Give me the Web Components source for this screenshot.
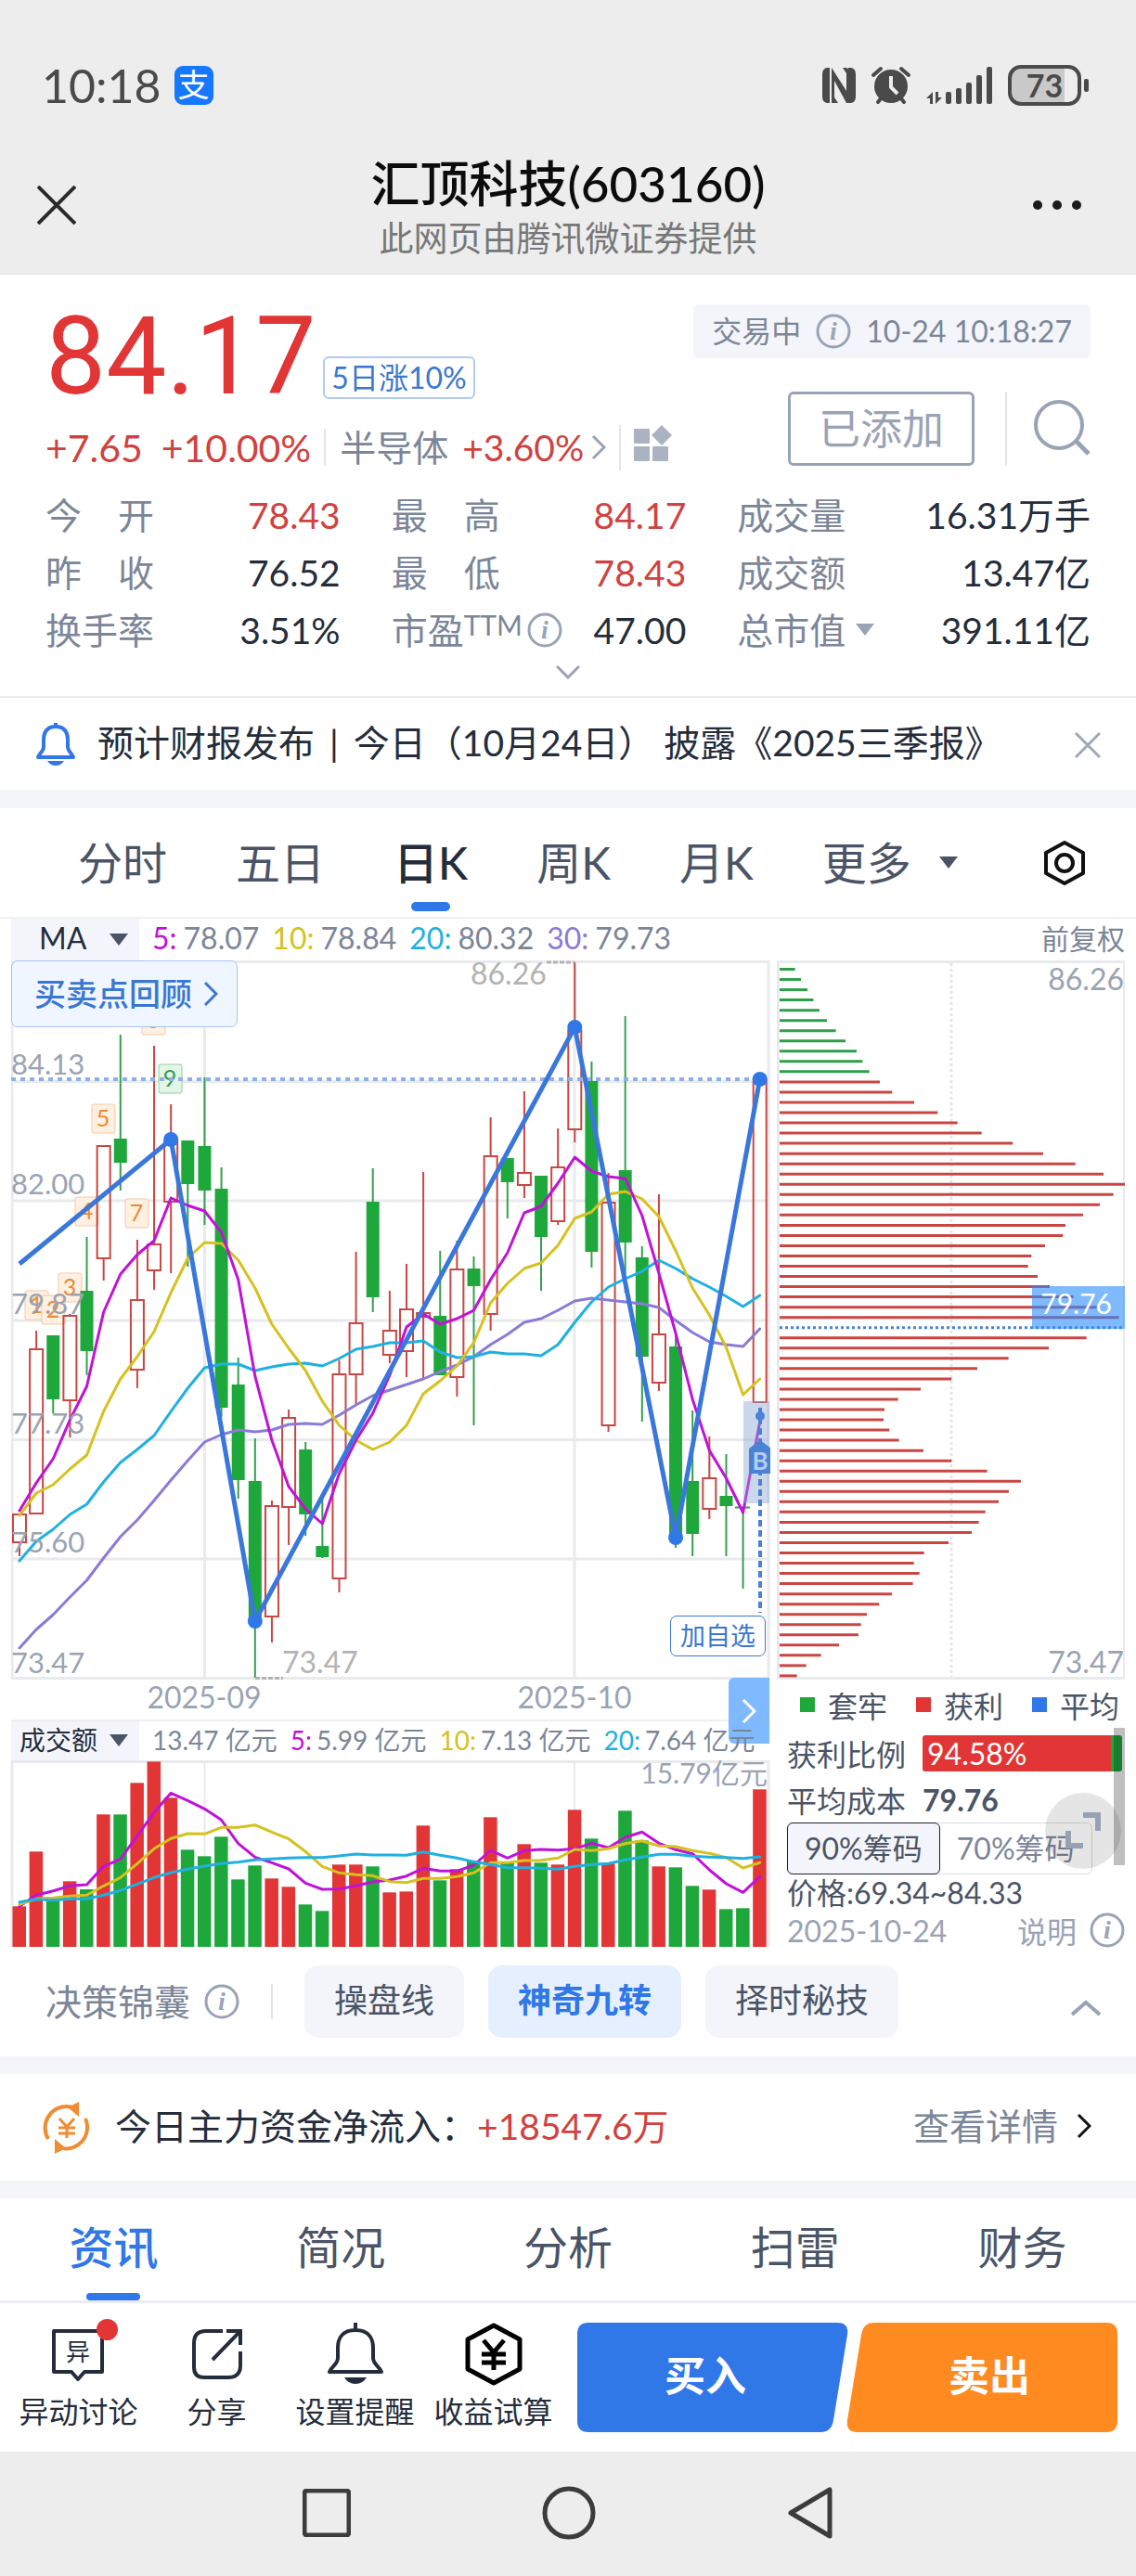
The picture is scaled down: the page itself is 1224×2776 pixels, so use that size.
<!DOCTYPE html>
<html lang="zh-CN">
<head>
<meta charset="utf-8">
<meta name="viewport" content="width=device-width, initial-scale=1">
<title>汇顶科技(603160)</title>
<style>
  :root {
    --red: #e23535;
    --red-text: #d0423f;
    --green: #1ea83c;
    --blue: #3077e8;
    --ink: #252d3c;
    --slate: #4a5466;
    --muted: #7c8698;
    --soft: #9aa3b5;
    --band: #f4f5fa;
  }
  body {
    margin: 0;
    background: #fff;
    color: var(--ink);
    font-family: Lato, "Noto Sans CJK SC", sans-serif;
  }
</style>
</head>
<body>
<status-bar></status-bar>
<page-header>
  <span slot="title">汇顶科技(603160)</span>
  <span slot="subtitle">此网页由腾讯微证券提供</span>
</page-header>
<stock-quote></stock-quote>
<notice-bar>预计财报发布<b>|</b>今日（10月24日） 披露《2025三季报》</notice-bar>
<period-tabs></period-tabs>
<chart-board></chart-board>
<strategy-bar></strategy-bar>
<fund-flow amount="+18547.6万">今日主力资金净流入：</fund-flow>
<info-tabs></info-tabs>
<action-bar></action-bar>
<system-nav></system-nav>

<script>
const RESET = `
  :host, * { box-sizing: border-box; }
  button, select { font: inherit; color: inherit; background: none; border: 0; padding: 0; margin: 0; cursor: pointer; }
  a { color: inherit; text-decoration: none; }
  svg { display: block; }
`;

/** Registers an element whose shadow root is a fixed style + markup. */
function define(name, css, html) {
  const template = document.createElement("template");
  template.innerHTML = `<style>${RESET}${css}</style>${typeof html === "string" ? html : ""}`;
  customElements.define(
    name,
    class extends HTMLElement {
      constructor() {
        super();
        this.attachShadow({ mode: "open" });
        this.shadowRoot.append(template.content.cloneNode(true));
        if (typeof html === "function") {
          this.shadowRoot.innerHTML += html(this);
        }
      }
    },
  );
}

/* ---------- icons ---------- */

const ICONS = {
  nfc: [38, 40, `<path d="M9 1H6Q1 2 1 8V32Q1 38 6 39H9ZM29 1H32Q37 2 37 8V32Q37 38 32 39H29Z" fill="#4a4a4a"/><path d="M11 1L27 26V7L23 1H27Q30 2 30 6V39H27L14 15V33L18 39H11Z" fill="#4a4a4a"/>`],
  alarm: [44, 42, `<g fill="none" stroke="#4a4a4a" stroke-width="4" stroke-linecap="round"><path d="M3 10L11 3M41 10L33 3M8 39L12 34M36 39L32 34"/></g><circle cx="22" cy="22" r="18" fill="#4a4a4a"/><path d="M22 11V23L29 30" fill="none" stroke="#ededed" stroke-width="4"/>`],
  signal: [74, 42, `<g fill="#4a4a4a"><path d="M5 41H8V28L1 35H5ZM11 28H14V34H18L11 41Z"/><rect x="22" y="28" width="6" height="13" rx="2"/><rect x="33" y="24" width="6" height="17" rx="2"/><rect x="44" y="18" width="6" height="23" rx="2"/><rect x="55" y="10" width="6" height="31" rx="2"/><rect x="66" y="1" width="6" height="40" rx="2"/></g>`],
  close: [42, 42, `<path d="M1 1L41 41M41 1L1 41" fill="none" stroke="#2a2a2a" stroke-width="4"/>`],
  closeSmall: [28, 28, `<path d="M1 1L27 27M27 1L1 27" fill="none" stroke="#a0a8b8" stroke-width="3"/>`],
  dots: [54, 12, `<g fill="#1b1b1b"><circle cx="6" cy="6" r="5"/><circle cx="27" cy="6" r="5"/><circle cx="48" cy="6" r="5"/></g>`],
  info: [38, 38, `<circle cx="19" cy="19" r="17" fill="none" stroke="#9aa3b5" stroke-width="3"/><text x="19" y="28" text-anchor="middle" font-family="Liberation Serif, serif" font-style="italic" font-weight="700" font-size="28" fill="#9aa3b5">i</text>`],
  right: [16, 28, `<path d="M2 2L14 14L2 26" fill="none" stroke="currentColor" stroke-width="3"/>`],
  down: [26, 16, `<path d="M1 2L13 14L25 2" fill="none" stroke="#9aa3b5" stroke-width="3"/>`],
  up: [32, 18, `<path d="M1 16L16 3L31 16" fill="none" stroke="#9aa3b5" stroke-width="4"/>`],
  caret: [20, 14, `<path d="M0 0H20L10 13Z" fill="currentColor"/>`],
  widgets: [42, 40, `<g fill="#abb3c3"><rect x="0" y="4" width="17" height="16" rx="1"/><rect x="0" y="23" width="17" height="16" rx="1"/><rect x="20" y="23" width="17" height="16" rx="1"/><path d="M30 0L41 11L30 22L19 11Z"/></g>`],
  search: [62, 60, `<circle cx="28" cy="27" r="25" fill="none" stroke="#9aa3b5" stroke-width="4"/><path d="M46 44L60 58" stroke="#9aa3b5" stroke-width="5"/>`],
  bellBlue: [44, 48, `<path d="M22 1V5M22 5C12 5 9 12 9 20V27C9 31 4 35 3 38H41C40 35 35 31 35 27V20C35 12 32 5 22 5Z" fill="none" stroke="#3077e8" stroke-width="4" stroke-linejoin="round"/><path d="M13 42H31Q28 47 22 47Q16 47 13 42Z" fill="#3077e8"/>`],
  hexGear: [46, 50, `<path d="M23 3L43 14V36L23 47L3 36V14Z" fill="none" stroke="#111" stroke-width="4" stroke-linejoin="round"/><circle cx="23" cy="25" r="9" fill="none" stroke="#111" stroke-width="4"/>`],
  expand: [40, 40, `<path d="M20 3H36V20M4 20V36H20" fill="none" stroke="#98a1b4" stroke-width="6"/>`],
  money: [52, 56, `<g fill="none" stroke="#f08c32" stroke-width="4"><path d="M6 40A23 23 0 0 1 35 7M46 18A23 23 0 0 1 17 49"/></g><path d="M39 0V16L27 6ZM13 56V40L25 50Z" fill="#f08c32"/><path d="M18 18L26 27L34 18M26 27V39M17 28H35M17 34H35" fill="none" stroke="#f08c32" stroke-width="3"/>`],
  chat: [60, 60, `<path d="M3 5H55V49H36L29 57L22 49H3Z" fill="none" stroke="#252d3c" stroke-width="4" stroke-linejoin="round"/><text x="29" y="37" text-anchor="middle" font-family="Noto Sans CJK SC, sans-serif" font-size="26" fill="#252d3c">异</text>`],
  share: [56, 56, `<path d="M34 3H16Q3 3 3 16V42Q3 53 14 53H40Q53 53 53 40V25" fill="none" stroke="#252d3c" stroke-width="4"/><path d="M38 3H53V18M53 3L23 34" fill="none" stroke="#252d3c" stroke-width="4"/>`],
  bell: [62, 68, `<path d="M31 0V8M31 8C17 8 12 17 12 27V38C12 45 5 47 3 53H59C57 47 50 45 50 38V27C50 17 45 8 31 8Z" fill="none" stroke="#252d3c" stroke-width="4" stroke-linejoin="round"/><path d="M19 59H43Q39 66 31 66Q23 66 19 59Z" fill="#252d3c"/>`],
  hexYen: [62, 68, `<path d="M31 3L59 18V50L31 65L3 50V18Z" fill="none" stroke="#000" stroke-width="5" stroke-linejoin="round"/><path d="M20 19L31 32L42 19M31 32V51M18 34H44M18 43H44" fill="none" stroke="#000" stroke-width="5"/>`],
  square: [52, 52, `<rect x="2" y="2" width="48" height="48" rx="3" fill="none" stroke="#3c3c3c" stroke-width="5"/>`],
  circle: [58, 58, `<circle cx="29" cy="29" r="26" fill="none" stroke="#3c3c3c" stroke-width="5"/>`],
  triangle: [50, 58, `<path d="M46 4V54L4 29Z" fill="none" stroke="#3c3c3c" stroke-width="5" stroke-linejoin="round"/>`],
};

define("ui-icon", `:host { display: inline-block; flex: none; line-height: 0; }`, (el) => {
  const [w, h, body] = ICONS[el.getAttribute("name")];
  return `<svg width="${w}" height="${h}" viewBox="0 0 ${w} ${h}" aria-hidden="true">${body}</svg>`;
});

/* ---------- system and page header ---------- */

define("status-bar", `
  :host { display: flex; align-items: center; height: 166px; padding: 18px 52px 0 45px; background: #ededed; color: #4a4a4a; }
  time { font-size: 50px; line-height: 60px; }
  .app { width: 42px; height: 42px; margin-left: 14px; border-radius: 9px; background: #1677ff; color: #fff; font-size: 34px; line-height: 40px; text-align: center; }
  .right { display: flex; align-items: center; gap: 15px; margin-left: auto; }
  .battery { position: relative; width: 79px; height: 44px; margin-right: 7px; border: 4px solid #4a4a4a; border-radius: 14px; background: linear-gradient(90deg, #c9c9c9 80%, #ededed 80%); font-size: 34px; font-weight: 700; line-height: 36px; text-align: center; }
  .battery::after { content: ""; position: absolute; right: -12px; top: 11px; width: 5px; height: 14px; border-radius: 2px; background: #4a4a4a; }
`, `
  <time>10:18</time>
  <span class="app">支</span>
  <div class="right">
    <ui-icon name="nfc"></ui-icon>
    <ui-icon name="alarm"></ui-icon>
    <ui-icon name="signal"></ui-icon>
    <span class="battery">73</span>
  </div>
`);

define("page-header", `
  :host { display: grid; grid-template-columns: 120px 1fr 120px; align-items: start; padding: 0 40px 16px; background: #ededed; border-bottom: 1px solid #e4e4e4; }
  button { display: flex; align-items: center; height: 110px; }
  .more { justify-content: flex-end; padding-right: 18px; }
  .titles { display: grid; gap: 5px; text-align: center; white-space: nowrap; }
  h1 { margin: 0; font-size: 53px; font-weight: 500; line-height: 64px; color: #0c0c0c; }
  p { margin: 0; font-size: 37px; line-height: 44px; color: #777; }
`, `
  <button aria-label="关闭"><ui-icon name="close"></ui-icon></button>
  <div class="titles"><h1><slot name="title"></slot></h1><p><slot name="subtitle"></slot></p></div>
  <button class="more" aria-label="更多"><ui-icon name="dots"></ui-icon></button>
`);

/* ---------- quote ---------- */

define("quote-stat", `
  :host { display: flex; align-items: center; justify-content: space-between; height: 62px; font-size: 39px; line-height: 62px; white-space: nowrap; }
  .label { display: flex; align-items: center; color: var(--muted); }
  :host([up]) .value { color: var(--red-text); }
`, `<span class="label"><slot name="label"></slot></span><span class="value"><slot></slot></span>`);

define("stock-quote", `
  :host { display: block; padding: 28px 49px 0; border-bottom: 2px solid #eaebef; }
  .top { display: flex; justify-content: space-between; align-items: flex-start; }
  .price { display: flex; align-items: flex-end; gap: 8px; color: var(--red); }
  .price strong { font: 400 116px/120px Roboto, sans-serif; }
  .tag { height: 46px; margin-bottom: 14px; padding: 0 7px; border: 2px solid #b3cbee; border-radius: 6px; color: #3a77d2; font-size: 32px; line-height: 42px; white-space: nowrap; }
  .change { display: flex; align-items: center; height: 56px; margin-top: 10px; font-size: 41px; color: var(--red-text); white-space: nowrap; }
  .change > span + span { margin-left: 20px; }
  .sector { display: flex; align-items: center; gap: 15px; margin: 0 14px; padding-left: 15px; border-left: 2px solid #e3e5ea; font-size: 39px; line-height: 40px; }
  .sector b { font-weight: 400; color: var(--muted); }
  .sector ui-icon { margin-left: -7px; color: var(--soft); }
  .widgets { padding-left: 14px; border-left: 2px solid #e3e5ea; }
  .session { display: flex; align-items: center; gap: 16px; height: 58px; margin-top: 4px; padding: 0 20px; border-radius: 6px; background: var(--band); color: var(--muted); font-size: 32px; line-height: 40px; white-space: nowrap; }
  .tools { display: flex; align-items: center; justify-content: flex-end; margin-top: 36px; }
  .added { height: 80px; padding: 0 30px; border: 3px solid var(--soft); border-radius: 6px; color: var(--soft); font-size: 45px; line-height: 70px; }
  .search { height: 80px; margin-left: 33px; padding-left: 28px; border-left: 2px solid #e3e5ea; }
  .stats { display: grid; grid-template-columns: 317fr 317fr 380fr; column-gap: 55px; margin-top: 14px; }
  .stats ui-icon { margin-left: 5px; }
  sup { align-self: flex-start; font-size: 30px; line-height: 50px; }
  .cap { display: flex; align-items: center; gap: 6px; }
  .cap ui-icon { color: var(--soft); }
  .fold { display: flex; align-items: flex-start; justify-content: center; width: 100%; height: 40px; padding-top: 6px; }
`, `
  <div class="top">
    <div>
      <div class="price"><strong>84.17</strong><span class="tag">5日涨10%</span></div>
      <div class="change">
        <span>+7.65</span><span>+10.00%</span>
        <a class="sector" href="#sector"><b>半导体</b>+3.60%<ui-icon name="right"></ui-icon></a>
        <button class="widgets" aria-label="组件"><ui-icon name="widgets"></ui-icon></button>
      </div>
    </div>
    <div>
      <div class="session"><span>交易中</span><ui-icon name="info"></ui-icon><span>10-24 10:18:27</span></div>
      <div class="tools">
        <button class="added">已添加</button>
        <button class="search" aria-label="搜索"><ui-icon name="search"></ui-icon></button>
      </div>
    </div>
  </div>
  <div class="stats">
    <quote-stat up><span slot="label">今　开</span>78.43</quote-stat>
    <quote-stat up><span slot="label">最　高</span>84.17</quote-stat>
    <quote-stat><span slot="label">成交量</span>16.31万手</quote-stat>
    <quote-stat><span slot="label">昨　收</span>76.52</quote-stat>
    <quote-stat up><span slot="label">最　低</span>78.43</quote-stat>
    <quote-stat><span slot="label">成交额</span>13.47亿</quote-stat>
    <quote-stat><span slot="label">换手率</span>3.51%</quote-stat>
    <quote-stat><span slot="label">市盈</span><sup slot="label">TTM</sup><ui-icon slot="label" name="info"></ui-icon>47.00</quote-stat>
    <quote-stat><button slot="label" class="cap">总市值<ui-icon name="caret"></ui-icon></button>391.11亿</quote-stat>
  </div>
  <button class="fold" aria-label="展开"><ui-icon name="down"></ui-icon></button>
`);

define("notice-bar", `
  :host { display: flex; align-items: center; height: 99px; padding: 0 38px; font-size: 39px; line-height: 60px; white-space: nowrap; }
  a { flex: 1; margin-left: 23px; padding-bottom: 4px; }
  ::slotted(b) { margin: 0 16px; font-weight: 400; }
`, `
  <ui-icon name="bellBlue"></ui-icon>
  <a href="#notice"><slot></slot></a>
  <button aria-label="关闭提醒"><ui-icon name="closeSmall"></ui-icon></button>
`);

define("period-tabs", `
  :host { display: flex; align-items: center; gap: 74px; height: 139px; padding: 0 54px 0 84px; border-top: 20px solid var(--band); border-bottom: 2px solid #f1f1f4; color: var(--slate); font-size: 48px; white-space: nowrap; }
  button { position: relative; height: 117px; line-height: 110px; }
  [aria-selected="true"] { color: var(--ink); font-weight: 500; }
  [aria-selected="true"]::after { content: ""; position: absolute; left: calc(50% - 21px); bottom: 6px; width: 42px; height: 10px; border-radius: 5px; background: var(--blue); }
  button.more { display: flex; align-items: center; gap: 30px; height: 110px; }
  .set { display: flex; align-items: center; margin-left: auto; }
`, `
  <button role="tab">分时</button>
  <button role="tab">五日</button>
  <button role="tab" aria-selected="true">日K</button>
  <button role="tab">周K</button>
  <button role="tab">月K</button>
  <button class="more">更多<ui-icon name="caret"></ui-icon></button>
  <button class="set" aria-label="设置"><ui-icon name="hexGear"></ui-icon></button>
`);

/* ---------- charts ---------- */

// One slot per trading day; x is the middle of the slot.
const dayX = (i) => 21 + i * 18.13;
const line = (values, map = (v) => v) =>
  values.map((v, i) => `${dayX(i).toFixed(1)},${map(v).toFixed(1)}`).join(" ");

// [direction, body top, body bottom, high, low]
const CANDLES = [
  ["r", 1632, 1662, 1632, 1677], ["r", 1454, 1631, 1434, 1631], ["g", 1439, 1508, 1439, 1523],
  ["r", 1418, 1509, 1416, 1549], ["g", 1391, 1456, 1333, 1482], ["r", 1235, 1356, 1234, 1380],
  ["g", 1227, 1253, 1115, 1283], ["r", 1401, 1476, 1336, 1496], ["r", 1341, 1369, 1127, 1390],
  ["r", 1230, 1295, 1190, 1372], ["g", 1229, 1276, 1229, 1365], ["g", 1235, 1283, 1161, 1320],
  ["g", 1281, 1517, 1258, 1527], ["g", 1492, 1595, 1463, 1615], ["g", 1596, 1743, 1550, 1808],
  ["r", 1623, 1742, 1617, 1770], ["r", 1528, 1624, 1519, 1665], ["g", 1562, 1632, 1554, 1655],
  ["g", 1666, 1678, 1613, 1679], ["r", 1481, 1701, 1466, 1716], ["r", 1426, 1481, 1349, 1513],
  ["g", 1295, 1398, 1259, 1414], ["r", 1434, 1460, 1391, 1469], ["r", 1411, 1456, 1362, 1484],
  ["r", 1415, 1419, 1263, 1485], ["g", 1418, 1482, 1348, 1482], ["r", 1368, 1484, 1337, 1505],
  ["g", 1367, 1386, 1354, 1536], ["r", 1246, 1416, 1204, 1434], ["g", 1248, 1274, 1248, 1313],
  ["r", 1264, 1277, 1176, 1291], ["g", 1267, 1333, 1267, 1391], ["r", 1258, 1316, 1216, 1320],
  ["r", 1110, 1217, 1037, 1231], ["g", 1165, 1349, 1144, 1366], ["r", 1296, 1536, 1264, 1543],
  ["g", 1261, 1339, 1095, 1393], ["g", 1355, 1462, 1343, 1532], ["r", 1438, 1490, 1287, 1499],
  ["g", 1451, 1655, 1438, 1668], ["g", 1596, 1653, 1520, 1677], ["r", 1593, 1626, 1548, 1637],
  ["g", 1612, 1623, 1567, 1677], ["g", 1624, 1625, 1624, 1712], ["r", 1163, 1511, 1163, 1511],
];

const PRICE_MA = {
  "#8a7bd8": [1776, 1756, 1740, 1721, 1703, 1679, 1656, 1638, 1617, 1595, 1574, 1554, 1546, 1541, 1543, 1541, 1535, 1534, 1535, 1525, 1514, 1504, 1498, 1492, 1486, 1478, 1471, 1462, 1449, 1438, 1425, 1421, 1412, 1402, 1399, 1401, 1403, 1405, 1409, 1423, 1436, 1446, 1449, 1451, 1432],
  "#1fb0e2": [1682, 1661, 1648, 1632, 1621, 1597, 1576, 1562, 1547, 1521, 1496, 1474, 1470, 1470, 1477, 1473, 1470, 1469, 1472, 1464, 1454, 1451, 1447, 1447, 1445, 1457, 1463, 1462, 1457, 1459, 1459, 1461, 1449, 1425, 1403, 1387, 1378, 1370, 1358, 1367, 1378, 1387, 1397, 1408, 1396],
  "#d6c11f": [1633, 1609, 1600, 1583, 1568, 1521, 1486, 1462, 1435, 1393, 1356, 1339, 1340, 1358, 1388, 1427, 1453, 1477, 1510, 1536, 1552, 1562, 1554, 1536, 1502, 1488, 1472, 1447, 1404, 1383, 1367, 1361, 1342, 1313, 1306, 1287, 1284, 1292, 1311, 1348, 1388, 1417, 1452, 1503, 1486],
  "#c012d8": [1628, 1598, 1572, 1530, 1494, 1414, 1373, 1352, 1337, 1291, 1299, 1305, 1328, 1379, 1483, 1552, 1602, 1626, 1642, 1588, 1552, 1523, 1482, 1430, 1416, 1427, 1421, 1412, 1379, 1350, 1307, 1300, 1275, 1247, 1262, 1268, 1270, 1310, 1372, 1437, 1508, 1563, 1593, 1630, 1532],
};

// Turning points of the trend line: [day, y]
const TREND = [[0, 1362], [9, 1228], [14, 1747], [33, 1107], [39, 1657], [44, 1163]];

// Nine-turn counters: [digit, x, y]
const TURNS = [["6", 153, 1084], ["5", 99, 1190], ["4", 81, 1290], ["7", 135, 1292], ["3", 63, 1372], ["1", 27, 1391], ["2", 45, 1396], ["9", 171, 1147]];

const PRICE_LABELS = [["84.13", 1158], ["82.00", 1287], ["79.87", 1416], ["77.73", 1545], ["75.60", 1673], ["73.47", 1803]];

function candleSvg([dir, top, bottom, high, low], i) {
  const x = dayX(i);
  const wick = (a, b) => (b > a ? `<path d="M${x} ${a}V${b}"/>` : "");
  const body = dir === "r"
    ? `<rect x="${x - 7}" y="${top}" width="14" height="${bottom - top}" fill="none"/>`
    : `<rect x="${x - 7}" y="${top}" width="14" height="${bottom - top}" fill="#1ea83c" stroke="none"/>`;
  return `<g stroke="${dir === "r" ? "#c94643" : "#33a04e"}" stroke-width="2">${wick(high, top)}${wick(bottom, low)}${body}</g>`;
}

define("kline-chart", `
  :host { display: block; position: relative; }
  svg { width: 100%; height: auto; }
  .axis { font-size: 31px; fill: #9aa3b3; }
  .date { font-size: 32px; fill: #9aa3b3; text-anchor: middle; }
  .mark { font-size: 32px; fill: #b3b3b3; }
  .turn { font-size: 25px; text-anchor: middle; }
  .review { position: absolute; left: 0; top: 0; display: flex; align-items: center; gap: 12px; height: 72px; padding: 0 20px 0 24px; border: 1px solid #a9c4ee; border-radius: 7px; background: #eff6ff; color: #3a77d2; font-size: 34px; line-height: 60px; font-weight: 500; white-space: nowrap; }
  .watch { position: absolute; right: 5px; bottom: 70px; height: 44px; padding: 0 10px; border: 1px solid #3a77d2; border-radius: 7px; background: #fff; color: #3a77d2; font-size: 27px; line-height: 40px; white-space: nowrap; }
  .next { position: absolute; right: 1px; bottom: -24px; display: grid; place-items: center; width: 44px; height: 71px; border-radius: 6px 0 0 6px; background: #7fb9ff; color: #fff; }
`, () => `
  <svg viewBox="12 1035 818 820" role="img" aria-label="日K线">
    <g fill="none" stroke="#e9eaee" stroke-width="3">
      <path d="M12 1165.5H828M12 1294H828M12 1423H828M12 1551.5H828M12 1680H828M220.5 1037V1808M619 1037V1808"/>
      <rect x="13" y="1036.5" width="815" height="772"/>
    </g>
    <path d="M12 1854.5H828" stroke="#e9eaee" stroke-width="2"/>
    ${TURNS.map(([d, x, y]) => {
      const c = d === "9" ? ["#e4f5e8", "#8fd0a0", "#2f9e4b"] : ["#fff0e2", "#f3c9a4", "#ee8a33"];
      return `<rect x="${x}" y="${y}" width="25" height="31" rx="2" fill="${c[0]}" stroke="${c[1]}"/><text class="turn" x="${x + 12}" y="${y + 24}" fill="${c[2]}">${d}</text>`;
    }).join("")}
    ${CANDLES.map(candleSvg).join("")}
    <path d="M792 1624.5H808" stroke="#33a04e" stroke-width="2"/>
    <path d="M12 1163H826" stroke="#8fb0e2" stroke-width="4" stroke-dasharray="5 5"/>
    <g fill="none" stroke-width="3" stroke-linejoin="round" stroke-linecap="round">
      ${Object.entries(PRICE_MA).map(([c, v]) => `<polyline stroke="${c}" points="${line(v)}"/>`).join("")}
    </g>
    <polyline fill="none" stroke="#3a77dc" stroke-width="5" points="${TREND.map(([i, y]) => `${dayX(i)},${y}`).join(" ")}"/>
    ${TREND.slice(1).map(([i, y]) => `<circle cx="${dayX(i)}" cy="${y}" r="8" fill="#3077e8"/>`).join("")}
    <rect x="801" y="1510" width="28" height="110" fill="#8ba6d2" fill-opacity=".45"/>
    <path d="M819 1517V1738" stroke="#4a82d6" stroke-width="4" stroke-dasharray="7 4"/>
    <circle cx="819" cy="1526" r="5" fill="#4a82d6"/>
    <path d="M807 1588V1561L819 1552L831 1561V1588Z" fill="#4a82d6"/>
    <text x="819" y="1584" text-anchor="middle" font-size="26" font-weight="700" fill="#b5cdf2">B</text>
    ${PRICE_LABELS.map(([t, y]) => `<text class="axis" x="12" y="${y}">${t}</text>`).join("")}
    <path d="M589 1037H619M275 1808.5H305" stroke="#b3b3b3" stroke-width="3" stroke-dasharray="5 2"/>
    <text class="mark" x="507" y="1061">86.26</text>
    <text class="mark" x="304" y="1803">73.47</text>
    <text class="date" x="220" y="1841">2025-09</text>
    <text class="date" x="619" y="1841">2025-10</text>
  </svg>
  <button class="review">买卖点回顾<ui-icon name="right"></ui-icon></button>
  <button class="watch">加自选</button>
  <button class="next" aria-label="下一页"><ui-icon name="right"></ui-icon></button>
`);

// Bar tops measured in thirds of a unit below the header line.
const VOLUME = [643, 466, 613, 562, 588, 346, 346, 244, 175, 292, 460, 481, 418, 556, 511, 553, 580, 637, 658, 508, 508, 514, 598, 595, 382, 559, 523, 496, 355, 502, 442, 502, 508, 331, 424, 505, 334, 430, 514, 517, 577, 589, 652, 649, 265];
const VOLUME_MA = {
  "#c012d8": [643, 607, 593, 577, 573, 514, 490, 415, 340, 277, 301, 328, 364, 440, 484, 502, 522, 568, 588, 587, 577, 564, 558, 545, 520, 529, 529, 510, 462, 487, 463, 459, 461, 457, 439, 454, 420, 403, 439, 460, 473, 525, 570, 598, 547],
  "#d6c11f": [637, 619, 616, 610, 607, 577, 550, 505, 457, 424, 408, 409, 388, 388, 380, 403, 425, 466, 514, 535, 541, 544, 563, 566, 553, 553, 547, 535, 502, 502, 495, 494, 487, 459, 463, 457, 440, 431, 448, 450, 463, 472, 485, 519, 502],
  "#1fb0e2": [629, 620, 623, 619, 619, 607, 592, 571, 550, 534, 523, 513, 505, 500, 493, 490, 487, 485, 485, 480, 474, 477, 477, 478, 467, 478, 487, 499, 508, 518, 518, 520, 523, 514, 508, 505, 493, 484, 475, 475, 481, 484, 485, 488, 483],
};

define("volume-chart", `
  :host { display: block; }
  svg { width: 100%; height: auto; overflow: visible; }
`, () => {
  const y = (v) => 1840 + v / 3;
  return `
  <svg viewBox="12 1897 818 202" role="img" aria-label="成交额">
    <path d="M220.5 1898V2098M619 1898V2098" stroke="#e9eaee" stroke-width="2"/>
    <path d="M13 2098V1898.5H828V2098" fill="none" stroke="#e9eaee" stroke-width="3"/>
    <text x="827" y="1922" text-anchor="end" font-size="30" fill="#9aa3b3">15.79亿元</text>
    ${VOLUME.map((v, i) => `<rect x="${dayX(i) - 7.5}" y="${y(v)}" width="14.5" height="${2098 - y(v)}" fill="${CANDLES[i][0] === "r" ? "#e23535" : "#1ea83c"}"/>`).join("")}
    <g fill="none" stroke-width="3" stroke-linejoin="round" stroke-linecap="round">
      ${Object.entries(VOLUME_MA).map(([c, v]) => `<polyline stroke="${c}" points="${line(v, y)}"/>`).join("")}
    </g>
  </svg>`;
});

// Widths of the cost rows, highest price first; 0 is the average cost row.
const CHIPS = [
  50, 69, 90, 109, 129, 153, 182, 213, 249, 268, 290, 324, 364, 435, 511, 575, 653, 754, 852, 956, 1047, 1116, 1079, 1035,
  981, 924, 916, 858, 814, 803, 834, 873, 950, 1025, 1097, 0, 992, 870, 740, 639, 556, 456, 383, 339, 336, 355, 386, 465,
  556, 671, 780, 741, 708, 665, 644, 621, 546, 467, 434, 452, 431, 363, 322, 282, 263, 255, 192, 134, 86, 56,
];

define("chip-chart", `
  :host { display: block; }
  svg { width: 100%; height: auto; }
  text { font-size: 32px; fill: #9aa3b3; text-anchor: end; }
  .average { font-size: 30px; fill: #fff; }
`, () => `
  <svg viewBox="837 1035 375 776" role="img" aria-label="筹码分布">
    <path d="M1025 1038V1808" stroke="#e3e5e8" stroke-width="3" stroke-dasharray="3 3"/>
    <rect x="838.5" y="1036.5" width="373" height="772" fill="none" stroke="#e9eaee" stroke-width="3"/>
    ${CHIPS.map((w, i) => {
      const y = 1044.5 + i * 11.035;
      return w
        ? `<path d="M840 ${y}h${w / 3}" stroke="${i < 11 ? "#2f9e4b" : "#c94643"}" stroke-width="3"/>`
        : `<path d="M840 ${y}H1212" stroke="#4a82d6" stroke-width="3" stroke-dasharray="3 3"/>`;
    }).join("")}
    <rect x="1112" y="1386" width="100" height="46" fill="#2a8cff" fill-opacity=".6"/>
    <text class="average" x="1198" y="1416">79.76</text>
    <text x="1211" y="1067">86.26</text>
    <text x="1211" y="1803">73.47</text>
  </svg>
`);

define("chip-panel", `
  :host { display: block; position: relative; padding-left: 11px; color: var(--slate); font-size: 32px; white-space: nowrap; }
  .legend { display: flex; align-items: center; justify-content: space-between; height: 53px; padding: 0 6px 2px 14px; }
  .legend span { display: flex; align-items: center; gap: 14px; }
  .legend span::before { content: ""; width: 16px; height: 16px; background: var(--c); }
  .row { display: flex; align-items: center; gap: 18px; height: 50px; }
  .ratio { flex: 1; height: 39px; margin-right: 3px; padding-left: 5px; border-radius: 3px; background: linear-gradient(90deg, var(--red) 94.58%, var(--green) 94.58%); color: #fff; line-height: 40px; }
  .range { display: inline-flex; height: 56px; border: 1px solid #d9dce3; border-radius: 6px; color: var(--muted); }
  .range button { padding: 0 18px; line-height: 50px; }
  .range button[aria-pressed="true"] { margin: -1px 0 -1px -1px; border: 1px solid #1c2230; border-radius: 6px; background: var(--band); color: var(--slate); }
  .price { height: 36px; }
  .foot { height: 48px; justify-content: space-between; color: var(--soft); }
  .foot a { display: flex; align-items: center; gap: 14px; }
  .scroll { position: absolute; right: 0; top: 51px; width: 12px; height: 148px; background: rgba(0, 0, 0, .25); }
  .full { position: absolute; right: 4px; top: 121px; display: grid; place-items: center; width: 82px; height: 82px; border-radius: 50%; background: rgba(0, 0, 0, .1); }
`, `
  <div class="legend"><span style="--c:var(--green)">套牢</span><span style="--c:var(--red)">获利</span><span style="--c:var(--blue)">平均</span></div>
  <div class="row"><span>获利比例</span><span class="ratio">94.58%</span></div>
  <div class="row"><span>平均成本</span><b>79.76</b></div>
  <div class="range"><button aria-pressed="true">90%筹码</button><button aria-pressed="false">70%筹码</button></div>
  <div class="row price">价格:69.34~84.33</div>
  <div class="row foot"><time>2025-10-24</time><a href="#about">说明<ui-icon name="info"></ui-icon></a></div>
  <div class="scroll"></div>
  <button class="full" aria-label="全屏"><ui-icon name="expand"></ui-icon></button>
`);

define("indicator-row", `
  :host { position: relative; z-index: 1; display: flex; align-items: center; color: var(--muted); line-height: 38px; white-space: nowrap; }
  label { position: relative; display: flex; flex: none; align-items: center; width: 138px; height: 100%; margin-right: 14px; background: var(--band); color: var(--slate); }
  select { width: 100%; height: 100%; padding: 0 0 3px var(--pad, 30px); appearance: none; color: var(--ink); outline: 0; }
  label ui-icon { position: absolute; right: 12px; pointer-events: none; }
  ::slotted(span) { padding-bottom: 3px; }
`, (el) => `
  <label><select aria-label="指标"><option>${el.getAttribute("name")}</option></select><ui-icon name="caret"></ui-icon></label>
  <slot></slot>
`);

define("chart-board", `
  :host { display: block; padding: 0 12px; }
  .ma { height: 45px; font-size: 32px; }
  .ma span { margin-right: 14px; }
  .ma .adjust { margin: 0 0 0 auto; font-size: 30px; }
  .cols { display: grid; grid-template-columns: minmax(0, 818fr) minmax(0, 375fr); column-gap: 7px; align-items: start; }
  .amount { --pad: 9px; height: 42px; font-size: 28px; }
  .amount span { margin-right: 14px; }
  i { font-style: normal; margin-right: 7px; }
  .amount i { margin-right: 5px; }
`, `
  <indicator-row class="ma" name="MA">
    <span><i style="color:#c012d8">5:</i>78.07</span>
    <span><i style="color:#d6c11f">10:</i>78.84</span>
    <span><i style="color:#1fb0e2">20:</i>80.32</span>
    <span><i style="color:#8a7bd8">30:</i>79.73</span>
    <span class="adjust">前复权</span>
  </indicator-row>
  <div class="cols">
    <div>
      <kline-chart></kline-chart>
      <indicator-row class="amount" name="成交额">
        <span>13.47 亿元</span>
        <span><i style="color:#c012d8">5:</i>5.99 亿元</span>
        <span><i style="color:#d6c11f">10:</i>7.13 亿元</span>
        <span><i style="color:#1fb0e2">20:</i>7.64 亿元</span>
      </indicator-row>
      <volume-chart></volume-chart>
    </div>
    <div>
      <chip-chart></chip-chart>
      <chip-panel></chip-panel>
    </div>
  </div>
`);

/* ---------- lower sections ---------- */

define("strategy-bar", `
  :host { display: flex; align-items: center; padding: 14px 38px 20px 49px; font-size: 36px; white-space: nowrap; }
  .name { display: flex; align-items: center; gap: 15px; margin-right: 34px; padding-right: 34px; border-right: 2px solid #e3e5ea; color: var(--muted); font-size: 39px; line-height: 32px; }
  .chips { display: flex; gap: 26px; }
  .chips button { height: 78px; padding: 0 32px 4px; border-radius: 15px; background: var(--band); color: var(--slate); line-height: 70px; }
  .chips button[aria-pressed="true"] { background: #e5effe; color: var(--blue); font-weight: 700; }
  .fold { margin-left: auto; padding-top: 4px; }
`, `
  <span class="name">决策锦囊<ui-icon name="info"></ui-icon></span>
  <div class="chips">
    <button aria-pressed="false">操盘线</button>
    <button aria-pressed="true">神奇九转</button>
    <button aria-pressed="false">择时秘技</button>
  </div>
  <button class="fold" aria-label="收起"><ui-icon name="up"></ui-icon></button>
`);

define("fund-flow", `
  :host { display: block; border: solid var(--band); border-width: 19px 0; }
  a { display: flex; align-items: center; height: 115px; padding: 0 48px 0 46px; font-size: 39px; line-height: 50px; white-space: nowrap; }
  span { padding-bottom: 3px; }
  .text { margin-left: 26px; }
  .amount { color: var(--red-text); }
  .detail { display: flex; align-items: center; gap: 20px; margin-left: auto; color: var(--muted); }
  .detail ui-icon { color: #111; }
`, (el) => `
  <a href="#flow">
    <ui-icon name="money"></ui-icon>
    <span class="text"><slot></slot></span>
    <span class="amount">${el.getAttribute("amount")}</span>
    <span class="detail">查看详情<ui-icon name="right"></ui-icon></span>
  </a>
`);

define("info-tabs", `
  :host { display: grid; grid-template-columns: repeat(5, 1fr); height: 113px; border-bottom: 3px solid #ebecf2; color: var(--slate); font-size: 48px; }
  button { position: relative; height: 110px; padding-bottom: 4px; line-height: 102px; }
  [aria-selected="true"] { color: var(--blue); font-weight: 500; }
  [aria-selected="true"]::after { content: ""; position: absolute; left: calc(50% - 29px); bottom: 0; width: 58px; height: 8px; border-radius: 4px; background: var(--blue); }
`, `
  <button role="tab" aria-selected="true">资讯</button>
  <button role="tab">简况</button>
  <button role="tab">分析</button>
  <button role="tab">扫雷</button>
  <button role="tab">财务</button>
`);

define("action-bar", `
  :host { display: flex; height: 160px; padding: 21px 20px 0 10px; white-space: nowrap; }
  .links { display: grid; grid-template-columns: repeat(4, 149px); margin-right: 16px; }
  .links button { position: relative; display: flex; flex-direction: column; align-items: center; height: 118px; font-size: 32px; }
  .links ui-icon { display: grid; place-items: center; height: 68px; }
  .links span { margin-top: 8px; line-height: 40px; }
  .dot { position: absolute; left: 94px; top: -4px; width: 23px; height: 23px; border-radius: 50%; background: var(--red); }
  .trade { position: relative; flex: 1; height: 118px; color: #fff; font-size: 44px; font-weight: 700; }
  .trade + .trade { margin-left: -2px; }
  .trade svg { position: absolute; inset: 0; width: 100%; height: 100%; }
  .trade span { position: relative; display: block; padding: 0 16px 4px 0; line-height: 110px; }
  .trade + .trade span { padding: 0 0 4px 16px; }
`, `
  <div class="links">
    <button><ui-icon name="chat"></ui-icon><i class="dot"></i><span>异动讨论</span></button>
    <button><ui-icon name="share"></ui-icon><span>分享</span></button>
    <button><ui-icon name="bell"></ui-icon><span>设置提醒</span></button>
    <button><ui-icon name="hexYen"></ui-icon><span>收益试算</span></button>
  </div>
  <button class="trade">
    <svg viewBox="0 0 292 118" preserveAspectRatio="none"><path d="M12 0H280Q293 0 291 13L276 105Q274 118 262 118H12Q0 118 0 106V12Q0 0 12 0Z" fill="#3077e8"/></svg>
    <span>买入</span>
  </button>
  <button class="trade">
    <svg viewBox="0 0 292 118" preserveAspectRatio="none"><path d="M280 118H12Q-1 118 1 105L16 13Q18 0 30 0H280Q292 0 292 12V106Q292 118 280 118Z" fill="#ff8a1f"/></svg>
    <span>卖出</span>
  </button>
`);

define("system-nav", `
  :host { display: flex; align-items: center; justify-content: center; gap: 206px; height: 134px; background: #ededed; }
`, `
  <button aria-label="最近任务"><ui-icon name="square"></ui-icon></button>
  <button aria-label="主屏幕"><ui-icon name="circle"></ui-icon></button>
  <button aria-label="返回"><ui-icon name="triangle"></ui-icon></button>
`);
</script>
</body>
</html>
